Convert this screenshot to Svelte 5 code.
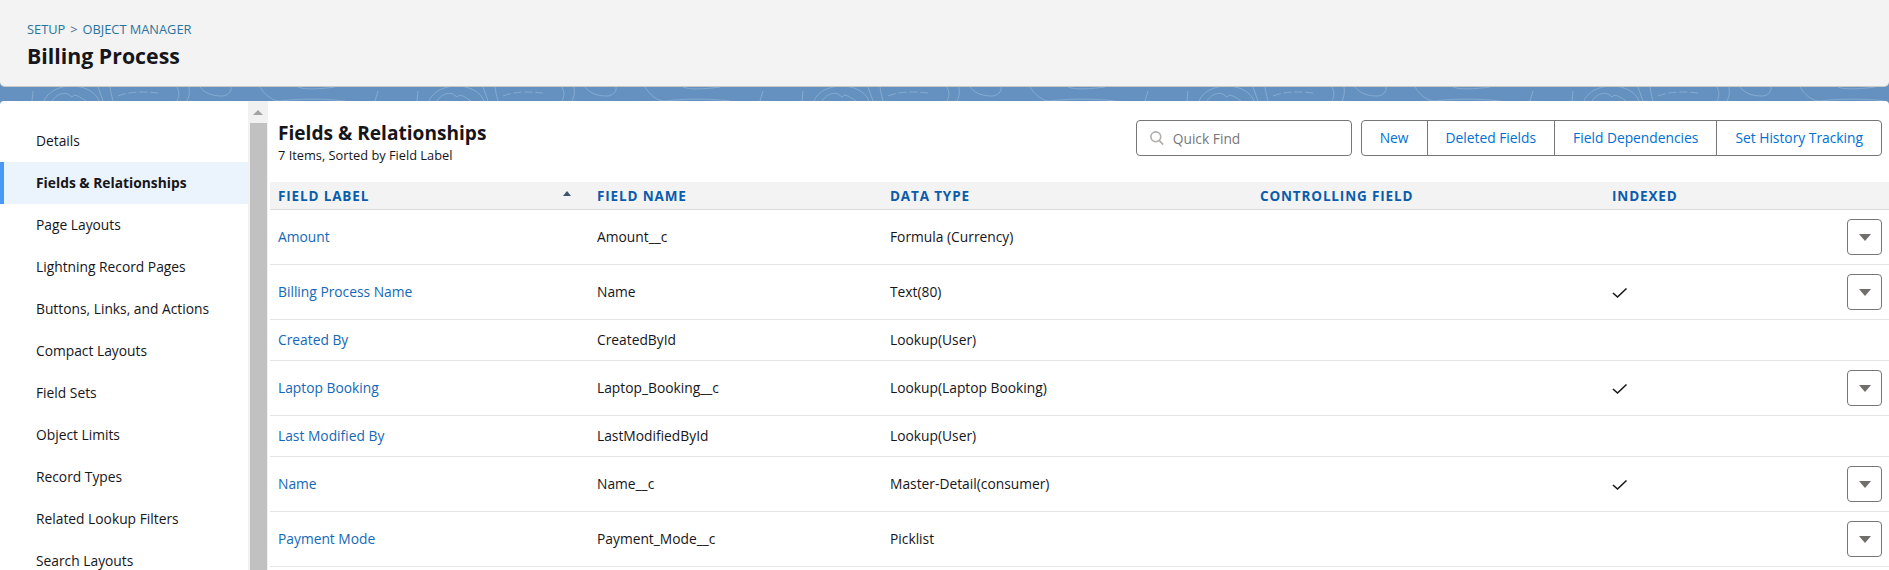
<script lang="ts">
  const sections = [
    'Details',
    'Fields & Relationships',
    'Page Layouts',
    'Lightning Record Pages',
    'Buttons, Links, and Actions',
    'Compact Layouts',
    'Field Sets',
    'Object Limits',
    'Record Types',
    'Related Lookup Filters',
    'Search Layouts'
  ];

  const fields = [
    { label: 'Amount', name: 'Amount__c', type: 'Formula (Currency)', indexed: false, menu: true },
    { label: 'Billing Process Name', name: 'Name', type: 'Text(80)', indexed: true, menu: true },
    { label: 'Created By', name: 'CreatedById', type: 'Lookup(User)', indexed: false, menu: false },
    { label: 'Laptop Booking', name: 'Laptop_Booking__c', type: 'Lookup(Laptop Booking)', indexed: true, menu: true },
    { label: 'Last Modified By', name: 'LastModifiedById', type: 'Lookup(User)', indexed: false, menu: false },
    { label: 'Name', name: 'Name__c', type: 'Master-Detail(consumer)', indexed: true, menu: true },
    { label: 'Payment Mode', name: 'Payment_Mode__c', type: 'Picklist', indexed: false, menu: true }
  ];

  const actions = ['New', 'Deleted Fields', 'Field Dependencies', 'Set History Tracking'];
</script>

<div class="page">
  <header class="top">
    <div class="crumbs">
      <a href="#setup">SETUP</a><span class="sep">&gt;</span><a href="#objects">OBJECT MANAGER</a>
    </div>
    <h1>Billing Process</h1>
  </header>

  <svg class="band" height="14" aria-hidden="true">
    <defs>
      <pattern id="swirl" width="385" height="14" patternUnits="userSpaceOnUse">
        <g fill="none" stroke="#86aad0" stroke-width="1">
          <path d="M33 4 L32 14" />
          <path d="M44 14 C48 4 60 -1 72 -1 C84 -1 96 5 99 14" />
          <path d="M52 14 C56 8 62 5 68 7 L72 10 C75 6 80 10 86 14" />
          <path d="M98 0 L103 14 M110 0 L111 6 L113 14" />
          <path d="M118 9 C128 5 140 4 158 6" stroke-dasharray="8 3" />
          <path d="M177 0 C180 6 179 10 177 14 M189 0 C190 6 189 10 187 14" />
          <path d="M200 0 C206 8 216 9 222 9 C228 9 232 4 231 0" />
          <path d="M260 0 C265 8 272 14 280 14 C295 12 320 11 345 14" />
          <path d="M298 0 C305 3 320 2 335 0" />
          <path d="M378 4 L375 14" />
        </g>
      </pattern>
    </defs>
    <rect width="100%" height="14" fill="#6491c0" />
    <rect width="100%" height="14" fill="url(#swirl)" />
  </svg>

  <div class="main">
    <nav class="side">
      {#each sections as item}
        <a class="item" class:active={item === 'Fields & Relationships'} href="#section">{item}</a>
      {/each}
    </nav>

    <div class="scroll">
      <span class="up"></span>
      <span class="thumb"></span>
    </div>

    <section class="content">
      <div class="head">
        <div class="titles">
          <h2>Fields &amp; Relationships</h2>
          <p>7 Items, Sorted by Field Label</p>
        </div>
        <label class="find">
          <svg width="16" height="16" viewBox="0 0 16 16" fill="none" stroke="#b0adab" stroke-width="1.6" aria-hidden="true">
            <circle cx="6.8" cy="6.8" r="4.9" />
            <path d="M10.4 10.6 L14.2 14.6" />
          </svg>
          <input placeholder="Quick Find" />
        </label>
        <div class="actions">
          {#each actions as action}
            <button type="button">{action}</button>
          {/each}
        </div>
      </div>

      <div class="grid thead">
        <div class="sortable">
          FIELD LABEL
          <span class="sort"></span>
        </div>
        <div>FIELD NAME</div>
        <div>DATA TYPE</div>
        <div>CONTROLLING FIELD</div>
        <div>INDEXED</div>
        <div></div>
      </div>

      {#each fields as field}
        <div class="grid row" class:tall={field.menu}>
          <div class="cell"><a href="#field">{field.label}</a></div>
          <div class="cell">{field.name}</div>
          <div class="cell">{field.type}</div>
          <div></div>
          <div>
            {#if field.indexed}
              <svg class="tick" width="16" height="12" viewBox="0 0 16 12" fill="none" stroke="#16151a" stroke-width="1.6" aria-hidden="true">
                <path d="M1 6 L5.5 10 L14.5 1.5" />
              </svg>
            {/if}
          </div>
          <div class="last">
            {#if field.menu}
              <button class="menu" type="button" aria-label="Show actions"><span></span></button>
            {/if}
          </div>
        </div>
      {/each}
    </section>
  </div>
</div>

<style>
  :global(body) {
    margin: 0;
    background: #fff;
    overflow: hidden;
  }

  .page {
    width: 1889px;
    height: 570px;
    overflow: hidden;
    background: #6491c0;
    font-family: "Open Sans", "Liberation Sans", sans-serif;
    font-size: 13.8px;
    color: #16151a;
    position: relative;
  }

  .top {
    height: 87px;
    box-sizing: border-box;
    padding: 20px 27px 0;
    background: #f3f3f3;
    border-bottom: 1px solid #c9c9c9;
    border-radius: 0 0 5px 5px;
    position: relative;
  }

  .crumbs {
    font-size: 12.8px;
    line-height: 18px;
    color: #54698d;
  }

  .crumbs a {
    color: #2a739e;
    text-decoration: none;
  }

  .sep {
    margin: 0 5px;
  }

  h1 {
    margin: 6px 0 0;
    font-size: 21.3px;
    line-height: 24px;
    font-weight: 700;
    color: #16151a;
  }

  .band {
    display: block;
    width: 100%;
  }

  .main {
    display: flex;
    height: 469px;
    background: #fff;
    border-radius: 4px 4px 0 0;
    overflow: hidden;
  }

  .side {
    width: 248px;
    flex: none;
    padding-top: 19px;
    box-sizing: border-box;
  }

  .item {
    display: block;
    height: 42px;
    line-height: 41px;
    padding-left: 36px;
    color: #16151a;
    text-decoration: none;
    white-space: nowrap;
  }

  .item.active {
    background: #ebf3fc;
    font-weight: 700;
    box-shadow: inset 4px 0 0 #4a98f5;
  }

  .scroll {
    width: 20px;
    flex: none;
    background: #f1f1f1;
    display: flex;
    flex-direction: column;
    align-items: center;
  }

  .up {
    margin-top: 9px;
    width: 0;
    height: 0;
    border-left: 5px solid transparent;
    border-right: 5px solid transparent;
    border-bottom: 5px solid #a3a3a3;
  }

  .thumb {
    margin-top: 8px;
    width: 17px;
    flex: 1;
    background: #c1c1c1;
  }

  .content {
    flex: 1;
    min-width: 0;
    padding-left: 2px;
  }

  .head {
    height: 81px;
    box-sizing: border-box;
    display: flex;
    align-items: flex-start;
    padding: 19px 7px 0 8px;
  }

  .titles {
    flex: 1;
  }

  h2 {
    margin: 0;
    font-size: 19.1px;
    line-height: 26px;
    font-weight: 700;
    color: #16151a;
  }

  .titles p {
    margin: 0;
    font-size: 12.8px;
    line-height: 18px;
  }

  .find {
    width: 216px;
    height: 36px;
    box-sizing: border-box;
    border: 1px solid #767676;
    border-radius: 4px;
    display: flex;
    align-items: center;
    gap: 8px;
    padding-left: 12px;
    margin-right: 9px;
  }

  .find input {
    border: 0;
    outline: 0;
    padding: 0;
    width: 160px;
    font: inherit;
    color: #16151a;
  }

  .find input::placeholder {
    color: #777;
    opacity: 1;
  }

  .actions {
    display: flex;
    height: 36px;
    box-sizing: border-box;
    border: 1px solid #767676;
    border-radius: 4px;
  }

  .actions button {
    border: 0;
    border-left: 1px solid #767676;
    background: none;
    font: inherit;
    color: #0070d2;
    padding: 0 18px 1px;
    white-space: nowrap;
  }

  .actions button:first-child {
    border-left: 0;
  }

  .grid {
    display: grid;
    grid-template-columns: 327px 293px 370px 352px 1fr 35px;
    align-items: center;
    padding-right: 7px;
    box-sizing: border-box;
  }

  .grid > div:first-child {
    padding-left: 8px;
  }

  .thead {
    height: 28px;
    padding-top: 1px;
    background: #f3f3f3;
    border-bottom: 1px solid #dddbda;
    font-size: 13.5px;
    font-weight: 700;
    letter-spacing: 0.85px;
    color: #0b5cab;
  }

  .sortable {
    position: relative;
  }

  .sort {
    position: absolute;
    right: 26px;
    top: 4px;
    width: 0;
    height: 0;
    border-left: 4px solid transparent;
    border-right: 4px solid transparent;
    border-bottom: 5px solid #3e5472;
  }

  .row {
    height: 41px;
    border-bottom: 1px solid #e5e5e5;
  }

  .row.tall {
    height: 55px;
  }

  .cell {
    margin-bottom: 2px;
  }

  .row a {
    color: #1468b8;
    text-decoration: none;
  }

  .tick {
    display: block;
    margin-top: 2px;
  }

  .last {
    display: flex;
    justify-content: flex-end;
  }

  .menu {
    width: 35px;
    height: 36px;
    padding: 0;
    background: #fff;
    border: 1px solid #767676;
    border-radius: 4px;
    display: flex;
    align-items: center;
    justify-content: center;
  }

  .menu span {
    width: 0;
    height: 0;
    border-left: 6px solid transparent;
    border-right: 6px solid transparent;
    border-top: 7px solid #706e6b;
  }
</style>
